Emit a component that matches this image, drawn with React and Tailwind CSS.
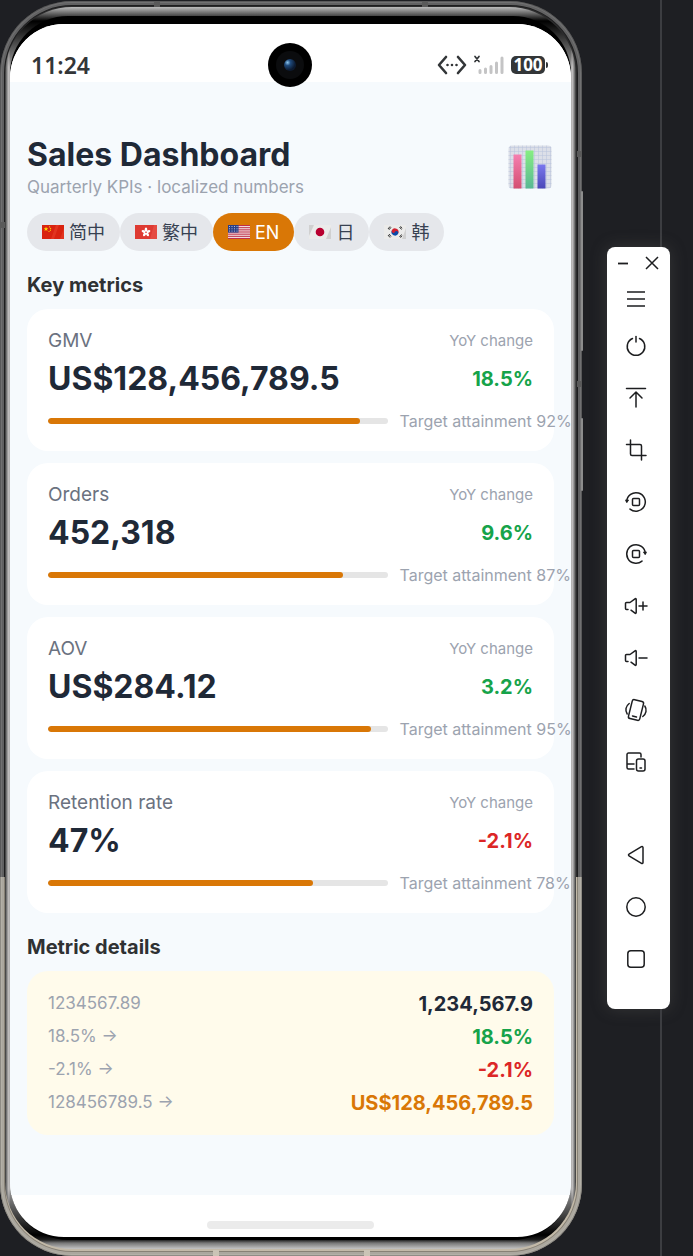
import { useState } from 'react'

const LANGS = [
  { id: 'sc', label: '简中', flag: 'cn' },
  { id: 'tc', label: '繁中', flag: 'hk' },
  { id: 'en', label: 'EN', flag: 'us' },
  { id: 'ja', label: '日', flag: 'jp' },
  { id: 'ko', label: '韩', flag: 'kr' },
]

const METRICS = [
  { name: 'GMV', value: 'US$128,456,789.5', yoy: '18.5%', up: true, target: 92 },
  { name: 'Orders', value: '452,318', yoy: '9.6%', up: true, target: 87 },
  { name: 'AOV', value: 'US$284.12', yoy: '3.2%', up: true, target: 95 },
  { name: 'Retention rate', value: '47%', yoy: '-2.1%', up: false, target: 78 },
]

const DETAILS = [
  { raw: '1234567.89', out: '1,234,567.9', color: 'text-[#1f2937]' },
  { raw: '18.5% →', out: '18.5%', color: 'text-[#16a34a]' },
  { raw: '-2.1% →', out: '-2.1%', color: 'text-[#dc2626]' },
  { raw: '128456789.5 →', out: 'US$128,456,789.5', color: 'text-[#d97706]' },
]

function Flag({ code }) {
  return (
    <svg viewBox="0 0 22 14" className="w-[22px] h-[14px] shrink-0" aria-hidden="true">
      {code === 'cn' && (
        <>
          <rect width="22" height="14" fill="#d9230f" />
          <path d="M9 14L14 0h3l-5 14zM18 14l4-11v11z" fill="#e8402a" opacity=".6" />
          <path d="M4 1.6l.6 1.6h1.7L5 4.3l.5 1.7L4 5 2.5 6 3 4.3 1.7 3.2h1.7z" fill="#ffde00" />
          <circle cx="7.6" cy="1.8" r=".6" fill="#ffde00" />
          <circle cx="8.6" cy="3.3" r=".6" fill="#ffde00" />
          <circle cx="8.4" cy="5.2" r=".6" fill="#ffde00" />
          <circle cx="7" cy="6.5" r=".6" fill="#ffde00" />
        </>
      )}
      {code === 'hk' && (
        <>
          <rect width="22" height="14" fill="#de3a32" />
          <path d="M15 14l4-14h3v14z" fill="#e9564c" opacity=".6" />
          {[0, 72, 144, 216, 288].map(a => (
            <ellipse key={a} cx="11" cy="4.8" rx="1.3" ry="2.2" fill="#fff" transform={`rotate(${a} 11 7.2)`} />
          ))}
          <circle cx="11" cy="7.2" r=".8" fill="#de3a32" />
        </>
      )}
      {code === 'us' && (
        <>
          <rect width="22" height="14" fill="#f3e9ea" />
          {[0, 2, 4, 6, 8, 10, 12].map(i => (
            <rect key={i} y={i * 1.077} width="22" height="1.077" fill="#c0304a" />
          ))}
          <rect width="10.5" height="7.6" fill="#2c3f86" />
          {[1.5, 3.8, 6.1].map(y => [1.5, 4, 6.5, 9].map(x => (
            <circle key={`${x}-${y}`} cx={x} cy={y} r=".5" fill="#dfe3f2" />
          )))}
        </>
      )}
      {code === 'jp' && (
        <>
          <rect width="22" height="14" fill="#ebebea" />
          <path d="M0 0h5L0 11zM17 14l5-12v12z" fill="#d0d0d0" />
          <circle cx="11" cy="7" r="4.3" fill="#b8002f" />
        </>
      )}
      {code === 'kr' && (
        <>
          <rect width="22" height="14" fill="#ebebea" />
          <path d="M18 14l4-11v11z" fill="#d0d0d0" />
          <g transform="rotate(25 11 7)">
            <path d="M7.5 7a3.5 3.5 0 0 1 7 0z" fill="#d02030" />
            <path d="M7.5 7a3.5 3.5 0 0 0 7 0z" fill="#0a4aa8" />
            <circle cx="9.25" cy="7" r="1.75" fill="#d02030" />
            <circle cx="12.75" cy="7" r="1.75" fill="#0a4aa8" />
          </g>
          <path d="M4 4l2-2.5M5 4.8l2-2.5M15.5 2l2 2.5M16.5 1.3l1.5 2M4 10l2 2.5M5 9l2 2.5M15.5 12l2-2.5M16.5 12.7l1.5-2" stroke="#222" strokeWidth=".9" />
        </>
      )}
    </svg>
  )
}

function ChartIcon() {
  return (
    <svg viewBox="0 0 44 44" className="w-11 h-11 shrink-0" aria-hidden="true">
      <defs>
        <linearGradient id="barA" x1="0" y1="0" x2="0" y2="1">
          <stop offset="0" stopColor="#f57fb0" />
          <stop offset="1" stopColor="#d44f72" />
        </linearGradient>
        <linearGradient id="barB" x1="0" y1="0" x2="0" y2="1">
          <stop offset="0" stopColor="#86ee82" />
          <stop offset="1" stopColor="#58b894" />
        </linearGradient>
        <linearGradient id="barC" x1="0" y1="0" x2="0" y2="1">
          <stop offset="0" stopColor="#7a78ee" />
          <stop offset="1" stopColor="#4b48b8" />
        </linearGradient>
        <pattern id="paper" width="4" height="4" patternUnits="userSpaceOnUse">
          <path d="M0 2.5h4M2.5 0v4" stroke="#b9c3dc" strokeWidth=".5" />
        </pattern>
      </defs>
      <rect x=".5" y=".5" width="43" height="43" rx="3.5" fill="#dcdfe8" />
      <rect x=".5" y=".5" width="43" height="43" rx="3.5" fill="url(#paper)" />
      <rect x="5.5" y="9.5" width="8" height="34" fill="url(#barA)" />
      <rect x="17.5" y="5.5" width="8" height="38" fill="url(#barB)" />
      <rect x="29.5" y="19.5" width="8" height="24" fill="url(#barC)" />
    </svg>
  )
}

function StatusBar() {
  return (
    <div className="relative z-10 h-[58px] pt-[19px] pl-[21px] pr-[23px] bg-white font-['Noto_Sans',sans-serif]">
      <div className="h-11 grid grid-cols-[1fr_44px_1fr] items-center">
        <span className="text-[23px] font-semibold text-[#333638] leading-none">11:24</span>

        {/* Camera */}
        <div className="w-11 h-11 rounded-full bg-black flex items-center justify-center">
          <div className="w-7 h-7 rounded-full bg-[#0b0c0e] flex items-center justify-center">
            <div className="w-3 h-3 rounded-full bg-[radial-gradient(circle_at_30%_30%,#8cc6ee_0,#1f4a7c_25%,#0c1a30_65%)]" />
          </div>
        </div>

        <div className="flex items-center justify-end">
          <svg viewBox="0 0 30 20" className="w-[30px] h-5" fill="none" stroke="#333638" strokeWidth="2.6" strokeLinecap="round" strokeLinejoin="round" aria-hidden="true">
            <path d="M9 2L2 10l7 8M21 2l7 8-7 8" />
            <path d="M10.5 10h.01M15 10h.01M19.5 10h.01" />
          </svg>
          <svg viewBox="0 0 32 20" className="w-8 h-5 ml-[6px]" fill="none" strokeLinecap="round" aria-hidden="true">
            <path d="M2 1.5l4 5M6 1.5L2 6.5" stroke="#333638" strokeWidth="1.7" />
            <path d="M7 15.5v2M12.5 14v3.5M18 11.5v6M23.5 8v9.5M29 3v14.5" stroke="#c4c4c5" strokeWidth="3" />
          </svg>
          <div className="ml-[6px] flex items-center gap-px">
            <span className="w-[34px] h-[18px] rounded-[5px] bg-[#333638] text-white text-[17px] leading-[18px] font-bold text-center">100</span>
            <span className="w-[2px] h-[6px] rounded-r-full bg-[#333638]" />
          </div>
        </div>
      </div>
    </div>
  )
}

function MetricCard({ metric }) {
  return (
    <article className="bg-white rounded-[21px] px-[21px] pt-5 pb-[18px]">
      <div className="flex items-center justify-between h-6">
        <span className="text-[19px] text-[#6b7280]">{metric.name}</span>
        <span className="text-[15px] text-[#9ca3af]">YoY change</span>
      </div>
      <div className="flex items-center justify-between h-10 mt-[6px]">
        <span className="text-[32px] leading-[42px] font-bold text-[#1f2937]">{metric.value}</span>
        <span className={`text-[20px] leading-[42px] font-bold ${metric.up ? 'text-[#16a34a]' : 'text-[#dc2626]'}`}>{metric.yoy}</span>
      </div>
      <div className="flex items-center gap-3 h-6 mt-[10px]">
        <div className="w-[70%] h-[6px] shrink-0 rounded-full bg-[#e5e5e5] overflow-hidden">
          <div className="h-full rounded-full bg-[#d97706]" style={{ width: `${metric.target}%` }} />
        </div>
        <span className="text-[16px] text-[#9ca3af] whitespace-nowrap">Target attainment {metric.target}%</span>
      </div>
    </article>
  )
}

function Dashboard() {
  const [lang, setLang] = useState('en')

  return (
    <main className="bg-[#f6fafd] px-[17px] pt-[53px] pb-[60px]">
      <header className="flex items-center justify-between pr-[2px]">
        <div>
          <h1 className="text-[32px] leading-10 font-bold text-[#1f2937]">Sales Dashboard</h1>
          <p className="text-[17px] leading-6 text-[#9ca3af]">Quarterly KPIs · localized numbers</p>
        </div>
        <ChartIcon />
      </header>

      {/* Language switch */}
      <div className="flex mt-[14px]">
        {LANGS.map(l => (
          <button
            key={l.id}
            type="button"
            aria-pressed={lang === l.id}
            onClick={() => setLang(l.id)}
            className={`h-[38px] px-[15px] rounded-full flex items-center gap-[5px] text-[18px] ${
              lang === l.id ? 'bg-[#d97706] text-white' : 'bg-[#e5e7eb] text-[#374151]'
            }`}
          >
            <Flag code={l.flag} />
            {l.label}
          </button>
        ))}
      </div>

      <h2 className="mt-[22px] mb-3 text-[20px] leading-6 font-bold text-[#2f3133]">Key metrics</h2>
      <div className="space-y-3">
        {METRICS.map(m => <MetricCard key={m.name} metric={m} />)}
      </div>

      <h2 className="mt-[22px] mb-3 text-[20px] leading-6 font-bold text-[#2f3133]">Metric details</h2>
      <dl className="bg-[#fffbeb] rounded-[21px] px-[21px] py-4">
        {DETAILS.map(d => (
          <div key={d.raw} className="h-[33px] flex items-center justify-between">
            <dt className="text-[17px] text-[#9ca3af]">{d.raw}</dt>
            <dd className={`text-[20px] font-bold ${d.color}`}>{d.out}</dd>
          </div>
        ))}
      </dl>
    </main>
  )
}

function Phone() {
  return (
    <div className="relative flex-1 min-w-0 self-start mt-px pl-[5px] pr-[6px] pt-[6px] pb-[7px] rounded-[72px] bg-[linear-gradient(to_bottom,#2c2c2d_876px,#c2b9a8_876px)] shadow-[inset_0_0_0_1px_rgba(0,0,0,.2),inset_0_0_0_2px_rgba(255,255,255,.1),inset_0_0_0_4px_rgba(255,255,255,.3),inset_0_0_0_5px_rgba(0,0,0,.3)]">
      {/* Side keys */}
      <span className="absolute -right-px top-[190px] w-[2px] h-[160px] rounded-full bg-[#8d8d8d]" />
      <span className="absolute -right-px top-[417px] w-[2px] h-[73px] rounded-full bg-[#8d8d8d]" />

      {/* Antenna bands */}
      <span className="absolute left-[154px] top-0 w-[6px] h-[6px] bg-[#5a5a5a]" />
      <span className="absolute right-[154px] top-0 w-[6px] h-[6px] bg-[#5a5a5a]" />
      <span className="absolute left-[213px] bottom-0 w-[6px] h-[6px] bg-[#cbc4b6]" />
      <span className="absolute right-[212px] bottom-0 w-[6px] h-[6px] bg-[#cbc4b6]" />
      <span className="absolute left-0 top-[221px] w-[5px] h-[6px] bg-[#5a5a5a]" />
      <span className="absolute right-0 top-[150px] w-[5px] h-[6px] bg-[#5a5a5a]" />
      <span className="absolute right-0 top-[380px] w-[5px] h-[6px] bg-[#5a5a5a]" />

      <div className="px-[5px] py-[9px] rounded-[67px] bg-[linear-gradient(to_bottom,#bdbdbd_0,#444_9px,#000_14px,transparent_60px),linear-gradient(to_top,#c4c4c4_0,#777_6px,#222_9px,#000_14px,transparent_60px),linear-gradient(to_right,#333_0,#8a8a8a_2px,#cfcccc_4px,#999_5px,#999_calc(100%-5px),#cfcccc_calc(100%-4px),#8a8a8a_calc(100%-2px),#333_100%)]">
        <div className="pt-2 pb-[3px] rounded-[58px] bg-black">
          <div className="rounded-[54px] bg-white overflow-hidden">
            <StatusBar />
            <Dashboard />
            <div className="h-[42px] flex items-center justify-center pt-[17px]">
              <div className="w-[167px] h-2 rounded-full bg-[#ebebeb]" />
            </div>
          </div>
        </div>
      </div>
    </div>
  )
}

const TOOLS = [
  { name: 'Power', d: <><path d="M8.5 4.5a8.8 8.8 0 1 0 7 0" /><path d="M12 2.5v5.5" /></> },
  { name: 'Swipe up', d: <path d="M2.5 2.5h19M12 6v15M6 12l6-6 6 6" /> },
  { name: 'Screenshot', d: <><path d="M2.5 6.5H16a1.5 1.5 0 0 1 1.5 1.5v14" /><path d="M6.5 2v14A1.5 1.5 0 0 0 8 17.5h14" /></> },
  { name: 'Rotate left', d: <><path d="M2.7 11.4a9.3 9.3 0 1 1 3.3 7.7" /><path d="M1.8 10h2.8l-1.600 2.400z" fill="currentColor" strokeWidth=".8" /><rect x="8.5" y="8.5" width="7" height="7" rx="1" /></> },
  { name: 'Rotate right', d: <><path d="M21.3 11.4a9.3 9.3 0 1 0-3.3 7.7" /><path d="M22.2 10h-2.8l1.600 2.400z" fill="currentColor" strokeWidth=".8" /><rect x="8.5" y="8.5" width="7" height="7" rx="1" /></> },
  { name: 'Volume up', d: <><path d="M4 15.5H2.5a1 1 0 0 1-1-1v-5a1 1 0 0 1 1-1H6L11 4.8c.6-.4 1.2-.1 1.2.6v13.2c0 .7-.6 1-1.2.6l-4-3" /><path d="M15 12h8M19 8v8" /></> },
  { name: 'Volume down', d: <><path d="M4 15.5H2.5a1 1 0 0 1-1-1v-5a1 1 0 0 1 1-1H6L11 4.8c.6-.4 1.2-.1 1.2.6v13.2c0 .7-.6 1-1.2.6l-4-3" /><path d="M15 12h8" /></> },
  { name: 'Shake', d: <><rect x="6.200" y="2.300" width="11.600" height="19.400" rx="2" transform="rotate(14 12 12)" /><path d="M8.500 18l4 1M5.200 5.500c-3.400 2.500-4.400 7-2 10.500M18.800 18.500c3.400-2.500 4.400-7 2-10.500" /></> },
  { name: 'Multi device', d: <><path d="M17 7V4.5A1.5 1.5 0 0 0 15.5 3h-11A1.5 1.5 0 0 0 3 4.5v13A1.5 1.5 0 0 0 4.5 19H10M3 14h7" /><rect x="12.5" y="9" width="8.5" height="12" rx="2" /><path d="M16 18h1.5" /></> },
]

const NAV = [
  { name: 'Back', d: <path d="M5 11.2L17.5 3.6c.7-.4 1.5 0 1.5.9v15c0 .9-.8 1.3-1.5.9L5 12.8a.9.9 0 0 1 0-1.6z" /> },
  { name: 'Home', d: <circle cx="12" cy="12" r="9.2" /> },
  { name: 'Recents', d: <rect x="3.8" y="3.8" width="16.4" height="16.4" rx="3" /> },
]

function ToolButton({ name, children }) {
  return (
    <button type="button" aria-label={name} className="w-full h-[52px] pr-[5px] flex items-center justify-center text-[#1d1e20]">
      <svg viewBox="0 0 24 24" className="w-6 h-6" fill="none" stroke="currentColor" strokeWidth="1.5" strokeLinecap="round" strokeLinejoin="round">
        {children}
      </svg>
    </button>
  )
}

function Toolbar() {
  return (
    <aside className="w-[63px] ml-[25px] mr-[23px] flex flex-col">
      <div className="w-[2px] h-[247px] mr-2 self-end bg-[#3c3d41]" />
      <div className="bg-white rounded-[8px] pb-6 shadow-[0_0_16px_rgba(90,90,85,.4)]">
        <div className="h-[31px] px-[10px] flex items-center justify-between text-[#1d1e20]">
          <button type="button" aria-label="Minimize">
            <svg viewBox="0 0 12 14" className="w-3 h-[14px]" stroke="currentColor" strokeWidth="1.8"><path d="M1 7.5h10" /></svg>
          </button>
          <button type="button" aria-label="Close">
            <svg viewBox="0 0 16 16" className="w-4 h-4" stroke="currentColor" strokeWidth="1.5"><path d="M2 2l12 12M14 2L2 14" /></svg>
          </button>
        </div>
        <button type="button" aria-label="Menu" className="w-full h-[42px] pr-[5px] flex items-center justify-center text-[#1d1e20]">
          <svg viewBox="0 0 24 24" className="w-6 h-6" stroke="currentColor" strokeWidth="1.5"><path d="M3 5h18M3 12h18M3 19h18" /></svg>
        </button>
        {TOOLS.map(t => <ToolButton key={t.name} name={t.name}>{t.d}</ToolButton>)}
        <div className="mt-[41px]">
          {NAV.map(t => <ToolButton key={t.name} name={t.name}>{t.d}</ToolButton>)}
        </div>
      </div>
      <div className="w-[2px] flex-1 mr-2 self-end bg-[#3c3d41]" />
    </aside>
  )
}

export default function App() {
  return (
    <div className="min-h-screen flex bg-[#1e1f23] font-['Inter','Noto_Sans_CJK_SC',sans-serif]">
      <Phone />
      <Toolbar />
    </div>
  )
}
